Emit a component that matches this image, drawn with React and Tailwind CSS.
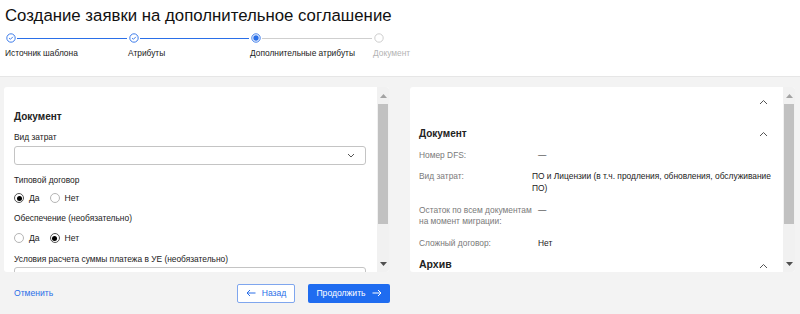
import React from "react";

function StepDone() {
  return (
    <svg width="10" height="10" viewBox="0 0 10 10" className="shrink-0">
      <circle cx="5" cy="5" r="4.2" fill="white" stroke="#2a6fe8" strokeWidth="0.9" />
      <path d="M3.1 5.1 L4.4 6.3 L6.9 3.8" fill="none" stroke="#2a6fe8" strokeWidth="0.9" />
    </svg>
  );
}
function StepCurrent() {
  return (
    <svg width="10" height="10" viewBox="0 0 10 10" className="shrink-0">
      <circle cx="5" cy="5" r="4.2" fill="white" stroke="#2a6fe8" strokeWidth="0.9" />
      <circle cx="5" cy="5" r="2.7" fill="#2a6fe8" />
    </svg>
  );
}
function StepTodo() {
  return (
    <svg width="10" height="10" viewBox="0 0 10 10" className="shrink-0">
      <circle cx="5" cy="5" r="4.2" fill="white" stroke="#c8c8c8" strokeWidth="0.9" />
    </svg>
  );
}

function Radio({ checked, label }) {
  return (
    <div className="flex items-center h-[12px]">
      <span
        className={
          "w-[10px] h-[10px] rounded-full border flex items-center justify-center bg-white " +
          (checked ? "border-[#555]" : "border-[#b5b5b5]")
        }
      >
        {checked && <span className="w-[5px] h-[5px] rounded-full bg-black" />}
      </span>
      <span className="ml-[5px] text-[8.6px] leading-[12px] text-[#222]">{label}</span>
    </div>
  );
}

function Scrollbar() {
  return (
    <div className="w-[12px] shrink-0 bg-[#f1f1f1] flex flex-col items-center">
      <div className="h-[17px] flex items-center justify-center">
        <svg width="7" height="4" viewBox="0 0 7 4"><path d="M0 4 L3.5 0 L7 4 Z" fill="#a3a3a3" /></svg>
      </div>
      <div className="w-[10px] h-[120px] bg-[#c1c1c1]" />
      <div className="flex-1" />
      <div className="h-[16px] flex items-center justify-center">
        <svg width="7" height="4" viewBox="0 0 7 4"><path d="M0 0 L3.5 4 L7 0 Z" fill="#505050" /></svg>
      </div>
    </div>
  );
}

function ChevronUp() {
  return (
    <svg width="9" height="6" viewBox="0 0 9 6">
      <path d="M1 5 L4.5 1.5 L8 5" fill="none" stroke="#555" strokeWidth="1" />
    </svg>
  );
}

function ArrowLeft({ color }) {
  return (
    <svg width="10" height="8" viewBox="0 0 10 8">
      <path d="M9.5 4 H1 M4 1 L1 4 L4 7" fill="none" stroke={color} strokeWidth="1" />
    </svg>
  );
}
function ArrowRight({ color }) {
  return (
    <svg width="10" height="8" viewBox="0 0 10 8">
      <path d="M0.5 4 H9 M6 1 L9 4 L6 7" fill="none" stroke={color} strokeWidth="1" />
    </svg>
  );
}

export default function App() {
  return (
    <div
      className="w-[800px] h-[314px] bg-[#f3f3f3] overflow-hidden text-[#222]"
      style={{ fontFamily: '"Liberation Sans", Arial, sans-serif' }}
    >
      {/* Header */}
      <div className="h-[77px] bg-white border-b border-[#e6e6e6] pl-[5px] pt-[4px]">
        <h1 className="text-[16.8px] leading-[24px] font-normal text-[#111]">
          Создание заявки на дополнительное соглашение
        </h1>
        <div className="mt-[5px] flex w-[420px]">
          <div className="w-[123px] flex flex-col">
            <div className="flex items-center h-[10px] pl-[1px]">
              <StepDone />
              <div className="flex-1 h-px bg-[#2a6fe8] ml-[1px] mr-[1px]" />
            </div>
            <div className="text-[8.4px] leading-[12px] mt-[4px] text-[#222]">Источник шаблона</div>
          </div>
          <div className="w-[122px] flex flex-col">
            <div className="flex items-center h-[10px] pl-[1px]">
              <StepDone />
              <div className="flex-1 h-px bg-[#2a6fe8] ml-[1px] mr-[1px]" />
            </div>
            <div className="text-[8.4px] leading-[12px] mt-[4px] text-[#222]">Атрибуты</div>
          </div>
          <div className="w-[123px] flex flex-col">
            <div className="flex items-center h-[10px] pl-[1px]">
              <StepCurrent />
              <div className="flex-1 h-px bg-[#cfcfcf] ml-[1px] mr-[1px]" />
            </div>
            <div className="text-[8.4px] leading-[12px] mt-[4px] text-[#222]">Дополнительные атрибуты</div>
          </div>
          <div className="flex flex-col">
            <div className="flex items-center h-[10px] pl-[1px]">
              <StepTodo />
            </div>
            <div className="text-[8.4px] leading-[12px] mt-[4px] text-[#b3b3b3]">Документ</div>
          </div>
        </div>
      </div>

      {/* Body */}
      <div className="flex pl-[4px] pt-[10px] gap-[21px]">
        {/* Left column */}
        <div className="w-[385px] flex flex-col">
          <div className="h-[185px] bg-white rounded-[3px] flex overflow-hidden">
            <div className="flex-1 pl-[10px] pr-[11px] pt-[23px] overflow-hidden">
              <div className="text-[10px] leading-[14px] font-bold text-[#222]">Документ</div>
              <div className="mt-[7px] text-[8.4px] leading-[12px]">Вид затрат</div>
              <div className="mt-[3px] h-[19px] border border-[#c4c4c4] rounded-[3px] flex items-center justify-end pr-[10px]">
                <svg width="8" height="5" viewBox="0 0 8 5">
                  <path d="M1 1 L4 4 L7 1" fill="none" stroke="#555" strokeWidth="1" />
                </svg>
              </div>
              <div className="mt-[9px] text-[8.4px] leading-[12px]">Типовой договор</div>
              <div className="mt-[6px] flex gap-[10px]">
                <Radio checked label="Да" />
                <Radio label="Нет" />
              </div>
              <div className="mt-[8px] text-[8.4px] leading-[12px]">Обеспечение (необязательно)</div>
              <div className="mt-[8px] flex gap-[10px]">
                <Radio label="Да" />
                <Radio checked label="Нет" />
              </div>
              <div className="mt-[9px] text-[8.4px] leading-[12px]">
                Условия расчета суммы платежа в УЕ (необязательно)
              </div>
              <div className="mt-[2px] h-[19px] border border-[#c4c4c4] rounded-[3px]" />
            </div>
            <Scrollbar />
          </div>
          <div className="flex items-center h-[42px] pl-[10px]">
            <span className="text-[8.6px] text-[#2a6fe8]">Отменить</span>
            <div className="flex-1" />
            <button className="w-[58px] h-[19px] border border-[#7fa6ee] rounded-[2px] bg-white text-[#2a6fe8] text-[8.6px] flex items-center justify-center gap-[6px]">
              <ArrowLeft color="#2a6fe8" />
              <span>Назад</span>
            </button>
            <button className="ml-[13px] mr-[-1px] w-[82px] h-[19px] rounded-[2px] bg-[#1f6cf0] text-white text-[8.6px] flex items-center justify-center gap-[6px]">
              <span>Продолжить</span>
              <ArrowRight color="white" />
            </button>
          </div>
        </div>

        {/* Right column */}
        <div className="w-[385px] h-[185px] bg-white rounded-[3px] flex overflow-hidden">
          <div className="flex-1 pl-[9px] pr-[15px] overflow-hidden">
            <div className="h-[28px] flex items-center justify-end pt-[1px]">
              <ChevronUp />
            </div>
            <div className="mt-[12px] h-[14px] flex items-center justify-between">
              <span className="text-[10px] leading-[14px] font-bold">Документ</span>
              <ChevronUp />
            </div>
            <div className="mt-[8px] flex text-[8.4px] leading-[12px]">
              <div className="w-[113px] text-[#7a7a7a] shrink-0">Номер DFS:</div>
              <div className="ml-[6px] text-[#222]">—</div>
            </div>
            <div className="mt-[9px] flex text-[8.4px] leading-[12px]">
              <div className="w-[113px] text-[#7a7a7a] shrink-0">Вид затрат:</div>
              <div className="text-[#222] w-[248px] shrink-0">
                ПО и Лицензии (в т.ч. продления, обновления, обслуживание ПО)
              </div>
            </div>
            <div className="mt-[11px] flex text-[8.4px] leading-[11px]">
              <div className="w-[113px] text-[#7a7a7a] shrink-0 whitespace-nowrap">
                Остаток по всем документам
                <br />
                на момент миграции:
              </div>
              <div className="ml-[6px] text-[#222]">—</div>
            </div>
            <div className="mt-[10px] flex text-[8.4px] leading-[12px]">
              <div className="w-[113px] text-[#7a7a7a] shrink-0">Сложный договор:</div>
              <div className="ml-[6px] text-[#222]">Нет</div>
            </div>
            <div className="mt-[8px] h-[15px] flex items-center justify-between">
              <span className="text-[10.5px] leading-[15px] font-bold">Архив</span>
              <span className="mt-[3px]"><ChevronUp /></span>
            </div>
          </div>
          <Scrollbar />
        </div>
      </div>
    </div>
  );
}
